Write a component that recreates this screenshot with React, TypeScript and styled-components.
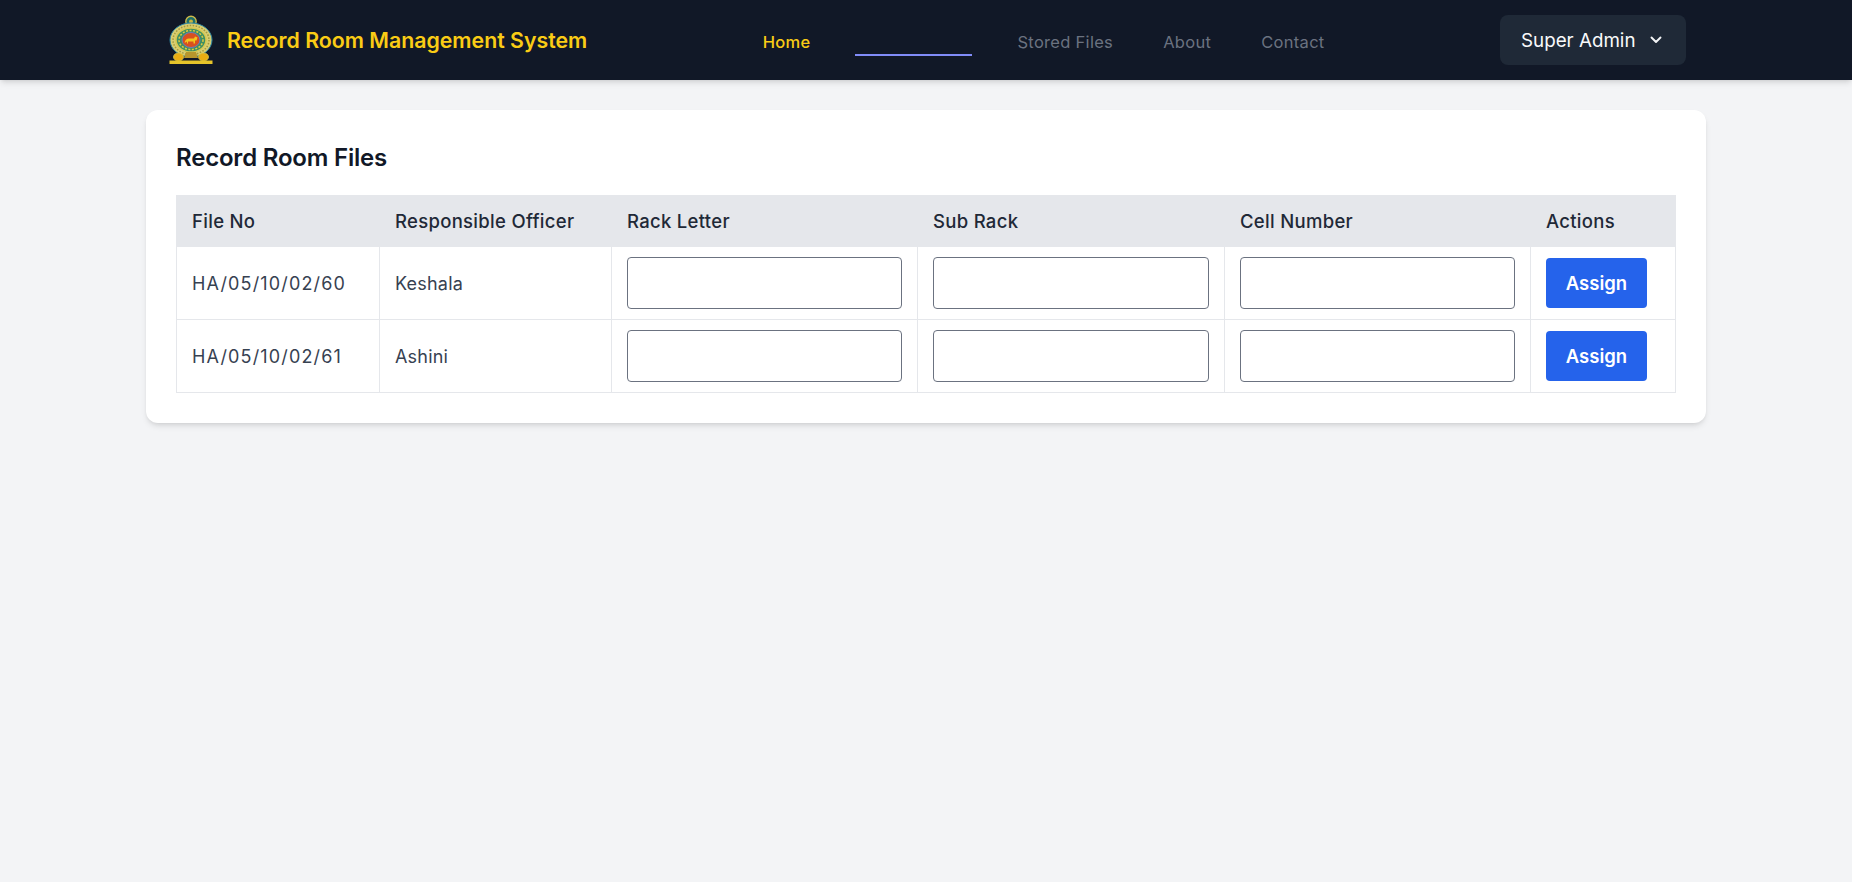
import React from "react";
import styled, { createGlobalStyle } from "styled-components";

const Global = createGlobalStyle`
  html, body { margin: 0; padding: 0; background: #f3f4f6; height: 100%; }
  body { font-family: "Inter", "Liberation Sans", sans-serif; color: #1f2937; }
  #root { min-height: 882px; }
`;

const NavBar = styled.nav`
  height: 80px;
  background: #111827;
  box-shadow: 0 4px 6px -1px rgba(0,0,0,.1), 0 2px 4px -2px rgba(0,0,0,.1);
`;
const NavInner = styled.div`
  width: 1536px;
  height: 100%;
  box-sizing: border-box;
  margin: 0 auto;
  padding: 0 8px;
  display: flex;
  align-items: center;
  justify-content: space-between;
`;
const Brand = styled.div`
  display: flex;
  align-items: center;
  gap: 11px;
`;
const BrandName = styled.span`
  font-size: 21.3px;
  font-weight: 600;
  color: #facc15;
`;
const NavLinks = styled.div`
  display: flex;
  align-items: center;
  gap: 50px;
`;
const NavLink = styled.a<{ $active?: boolean }>`
  display: block;
  padding-top: 3px;
  font-size: 16.5px;
  line-height: 24px;
  font-weight: ${(p) => (p.$active ? 500 : 400)};
  letter-spacing: 0.3px;
  color: ${(p) => (p.$active ? "#facc15" : "#6b7280")};
`;
const UnderlinedLink = styled.a`
  display: block;
  width: 117px;
  height: 32px;
  margin: 0 -5px;
  box-sizing: border-box;
  border-bottom: 2px solid #818cf8;
`;
const UserButton = styled.button`
  width: 186px;
  height: 50px;
  border: 0;
  border-radius: 8px;
  background: #1f2937;
  color: #f9fafb;
  font: 400 18.8px "Inter", sans-serif;
  display: flex;
  align-items: center;
  padding: 0 0 0 21px;
  gap: 14px;
`;
const Card = styled.section`
  width: 1560px;
  box-sizing: border-box;
  margin: 30px auto 0;
  padding: 30px;
  background: #fff;
  border-radius: 12px;
  box-shadow: 0 4px 6px -1px rgba(0,0,0,.1), 0 2px 4px -2px rgba(0,0,0,.1);
`;
const Title = styled.h2`
  margin: 0 0 21px;
  padding-top: 2px;
  font-size: 24px;
  line-height: 32px;
  font-weight: 600;
  letter-spacing: -0.2px;
  color: #111827;
`;
const Table = styled.table`
  width: 1499px;
  table-layout: fixed;
  border-collapse: collapse;
`;
const HeadCell = styled.th`
  height: 51px;
  box-sizing: border-box;
  padding: 0 15px;
  border: 1px solid #e5e7eb;
  background: #e5e7eb;
  text-align: left;
  font-size: 18.5px;
  font-weight: 500;
  letter-spacing: 0.3px;
  color: #1f2937;
`;
const Cell = styled.td<{ $spaced?: boolean }>`
  height: 73px;
  box-sizing: border-box;
  padding: 0 15px;
  border: 1px solid #e5e7eb;
  font-size: 18px;
  letter-spacing: ${(p) => (p.$spaced ? "1.15px" : "0.2px")};
  color: #374151;
`;
const Field = styled.input`
  display: block;
  width: 100%;
  height: 52px;
  box-sizing: border-box;
  border: 1px solid #6b7280;
  border-radius: 4px;
  background: #fff;
`;
const AssignButton = styled.button`
  display: block;
  width: 101px;
  height: 50px;
  border: 0;
  border-radius: 4px;
  background: #2563eb;
  color: #fff;
  font: 600 18.5px "Inter", sans-serif;
`;

const Emblem = () => (
  <svg width="50" height="50" viewBox="0 0 50 50" aria-hidden="true">
    <circle cx="25" cy="6.5" r="5.2" fill="#1d6f6a" stroke="#cdb94a" strokeWidth="1.4" />
    <circle cx="25" cy="6.5" r="2" fill="#c9b53e" />
    <path d="M20 12h10l2 3H18z" fill="#9fa648" />
    <ellipse cx="25" cy="25" rx="21" ry="17" fill="#d8cd72" stroke="#2b86a3" strokeWidth="1" />
    <ellipse cx="25" cy="25" rx="18" ry="14.5" fill="none" stroke="#a49a3c" strokeWidth="1.5" strokeDasharray="1.5 1.5" />
    <ellipse cx="25" cy="25" rx="15" ry="12" fill="#3f8f63" stroke="#d7c84e" strokeWidth="1.5" />
    <ellipse cx="25" cy="25" rx="12" ry="9.5" fill="none" stroke="#e2c93f" strokeWidth="1.5" strokeDasharray="2 1.5" />
    <ellipse cx="25" cy="25" rx="9" ry="7.5" fill="#d9501f" stroke="#6d7cc0" strokeWidth="1" />
    <path d="M18.5 27.5c1-2.5 2-4 4.5-4h5l1-2 2.5 1-1 3h-1.5v3h-1.5v-2h-5.5v2H21v-2l-1.5 1z" fill="#f4c61d" />
    <path d="M20 37h10l2 6H18z" fill="#b8962c" />
    <ellipse cx="12.5" cy="42" rx="5" ry="4" fill="#e9ac12" stroke="#d7c84e" strokeWidth=".8" />
    <ellipse cx="37.5" cy="42" rx="5" ry="4" fill="#e9ac12" stroke="#d7c84e" strokeWidth=".8" />
    <rect x="3.5" y="45.5" width="43" height="3.5" fill="#e6c42a" />
  </svg>
);

const Chevron = () => (
  <svg width="12" height="8" viewBox="0 0 12 8" fill="none" stroke="#f3f4f6" strokeWidth="1.9" strokeLinecap="round" strokeLinejoin="round" aria-hidden="true">
    <path d="M1.5 1.5 6 6l4.5-4.5" />
  </svg>
);

const rows = [
  { file: "HA/05/10/02/60", officer: "Keshala" },
  { file: "HA/05/10/02/61", officer: "Ashini" },
];
const widths = [203, 232, 306, 307, 306, 145];

export default function App() {
  return (
    <>
      <Global />
      <NavBar>
        <NavInner>
          <Brand>
            <Emblem />
            <BrandName>Record Room Management System</BrandName>
          </Brand>
          <NavLinks>
            <NavLink $active>Home</NavLink>
            <UnderlinedLink />
            <NavLink>Stored Files</NavLink>
            <NavLink>About</NavLink>
            <NavLink>Contact</NavLink>
          </NavLinks>
          <UserButton>
            Super Admin
            <Chevron />
          </UserButton>
        </NavInner>
      </NavBar>
      <Card>
        <Title>Record Room Files</Title>
        <Table>
          <colgroup>
            {widths.map((w, i) => (
              <col key={i} width={w} />
            ))}
          </colgroup>
          <thead>
            <tr>
              {["File No", "Responsible Officer", "Rack Letter", "Sub Rack", "Cell Number", "Actions"].map((h) => (
                <HeadCell key={h}>{h}</HeadCell>
              ))}
            </tr>
          </thead>
          <tbody>
            {rows.map((r) => (
              <tr key={r.file}>
                <Cell $spaced>{r.file}</Cell>
                <Cell>{r.officer}</Cell>
                <Cell><Field /></Cell>
                <Cell><Field /></Cell>
                <Cell><Field /></Cell>
                <Cell><AssignButton>Assign</AssignButton></Cell>
              </tr>
            ))}
          </tbody>
        </Table>
      </Card>
    </>
  );
}
